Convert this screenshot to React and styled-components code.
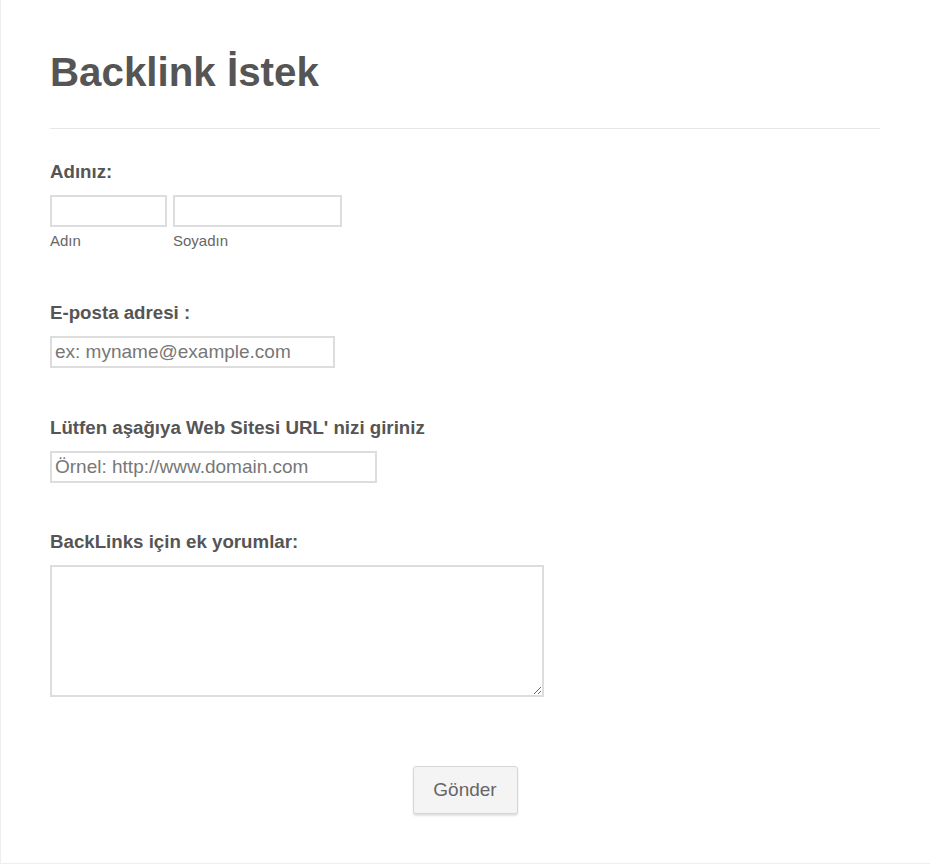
import React from 'react';
import styled, { createGlobalStyle } from 'styled-components';

const Global = createGlobalStyle`
  html, body {
    margin: 0;
    padding: 0;
    background: #fff;
  }
  * {
    box-sizing: border-box;
  }
`

const Page = styled.div`
  width: 930px;
  height: 864px;
  border-left: 1px solid #eeeeee;
  border-bottom: 1px solid #eeeeee;
  padding: 0 50px 0 49px;
  font-family: "Liberation Sans", Arial, sans-serif;
  color: #555;
`
const Header = styled.div`
  padding-top: 46px;
  padding-bottom: 28px;
  border-bottom: 1px solid #e6e6e6;
`
const Title = styled.h1`
  margin: 0;
  font-size: 40.3px;
  line-height: 54px;
  font-weight: bold;
  color: #555;
`
const Form = styled.form`
  display: flex;
  flex-direction: column;
`
const Field = styled.div`
  display: flex;
  flex-direction: column;
  margin-top: ${p => p.top}px;
`
const Label = styled.label`
  font-size: 18.7px;
  font-weight: bold;
  line-height: 22px;
  color: #555;
  margin-bottom: 12px;
`
const Row = styled.div`
  display: flex;
  gap: 6px;
`
const Sub = styled.div`
  display: flex;
  flex-direction: column;
`
const SubLabel = styled.span`
  font-size: 15px;
  line-height: 17px;
  margin-top: 5px;
  color: #666;
`
const Input = styled.input`
  width: ${p => p.w}px;
  height: ${p => p.h || 32}px;
  border: 2px solid #dddddd;
  padding: 0 3px;
  font-family: "Liberation Sans", Arial, sans-serif;
  font-size: 19px;
  color: #555;
  outline: none;
  &::placeholder {
    color: #777;
  }
`
const TextArea = styled.textarea`
  width: 494px;
  height: 132px;
  border: 2px solid #dddddd;
  font-family: "Liberation Sans", Arial, sans-serif;
  font-size: 18px;
  resize: both;
  outline: none;
`
const Actions = styled.div`
  display: flex;
  justify-content: center;
  margin-top: 69px;
`
const Button = styled.button`
  width: 105px;
  height: 48px;
  background: #f4f4f4;
  border: 1px solid #d6d6d6;
  border-radius: 3px;
  box-shadow: 0 2px 2px rgba(0, 0, 0, 0.12);
  font-family: "Liberation Sans", Arial, sans-serif;
  font-size: 19px;
  color: #666;
  cursor: pointer;
`

export default function App() {
  return (
    <>
      <Global />
      <Page>
        <Header>
          <Title>Backlink İstek</Title>
        </Header>
        <Form onSubmit={e => e.preventDefault()}>
          <Field top={32}>
            <Label>Adınız:</Label>
            <Row>
              <Sub>
                <Input w={117} />
                <SubLabel>Adın</SubLabel>
              </Sub>
              <Sub>
                <Input w={169} />
                <SubLabel>Soyadın</SubLabel>
              </Sub>
            </Row>
          </Field>
          <Field top={53}>
            <Label>E-posta adresi :</Label>
            <Input w={285} placeholder="ex: myname@example.com" />
          </Field>
          <Field top={49}>
            <Label>Lütfen aşağıya Web Sitesi URL' nizi giriniz</Label>
            <Input w={327} placeholder="Örnel: http://www.domain.com" />
          </Field>
          <Field top={48}>
            <Label>BackLinks için ek yorumlar:</Label>
            <TextArea />
          </Field>
          <Actions>
            <Button type="submit">Gönder</Button>
          </Actions>
        </Form>
      </Page>
    </>
  );
}
